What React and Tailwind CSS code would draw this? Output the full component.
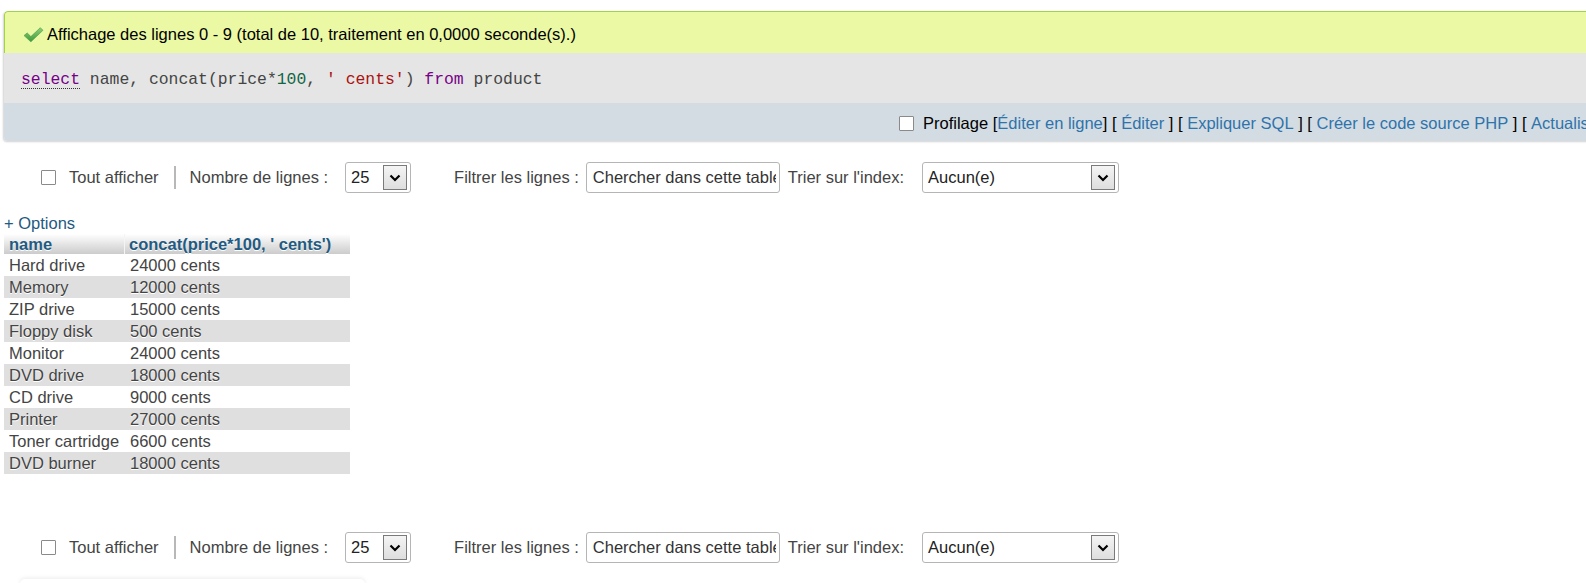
import React from "react";

function Checkbox() {
  return <div className="w-[15px] h-[15px] border border-[#8a8a8a] bg-white rounded-[1px] shrink-0" />;
}

function Chevron() {
  return (
    <svg width="12" height="8" viewBox="0 0 12 8">
      <path d="M1.5 1.5 L6 6 L10.5 1.5" fill="none" stroke="#000" strokeWidth="2.2" />
    </svg>
  );
}

function SelectBox({ width, value }) {
  return (
    <div className={`relative h-[31px] ${width} border border-[#b5b5b5] rounded-[3px] bg-white flex items-center pl-[5px] text-[#222]`}>
      <span>{value}</span>
      <div className="absolute right-[3px] top-[2px] w-[24px] h-[25px] border border-[#7a7a7a] bg-gradient-to-b from-[#f4f4f4] to-[#dedede] flex items-center justify-center">
        <Chevron />
      </div>
    </div>
  );
}

function Toolbar() {
  return (
    <div className="flex items-center h-[31px] text-[#444]">
      <div className="ml-[41px]"><Checkbox /></div>
      <span className="ml-[13px]">Tout afficher</span>
      <div className="ml-[15px] w-[2px] h-[23px] bg-[#b8b8b8]" />
      <span className="ml-[14px]">Nombre de lignes :</span>
      <div className="ml-[17px]"><SelectBox width="w-[66px]" value="25" /></div>
      <span className="ml-[43px]">Filtrer les lignes :</span>
      <div className="ml-[7px] h-[31px] w-[194px] border border-[#b5b5b5] rounded-[3px] bg-white flex items-center pl-[6px] pr-[3px] text-[#333]">
        <div className="flex-1 overflow-hidden whitespace-nowrap">Chercher dans cette table</div>
      </div>
      <span className="ml-[8px]">Trier sur l'index:</span>
      <div className="ml-[18px]"><SelectBox width="w-[197px]" value="Aucun(e)" /></div>
    </div>
  );
}

const rows = [
  ["Hard drive", "24000 cents"],
  ["Memory", "12000 cents"],
  ["ZIP drive", "15000 cents"],
  ["Floppy disk", "500 cents"],
  ["Monitor", "24000 cents"],
  ["DVD drive", "18000 cents"],
  ["CD drive", "9000 cents"],
  ["Printer", "27000 cents"],
  ["Toner cartridge", "6600 cents"],
  ["DVD burner", "18000 cents"],
];

export default function App() {
  return (
    <div className="w-[1586px] h-[583px] overflow-hidden bg-white text-[16.5px] text-black relative" style={{ fontFamily: '"Liberation Sans", Arial, sans-serif' }}>
      <div className="pt-[11px] pl-[4px]">
        <div className="w-[1640px] rounded-tl-[4px] rounded-bl-[4px] overflow-hidden shadow-[-1px_1px_2px_rgba(0,0,0,0.18)]">
          <div className="h-[42px] bg-[#ebf8a4] border-t border-l border-[#a2d246] rounded-tl-[4px] flex items-center pt-[4px]">
            <svg className="ml-[18px]" width="21" height="17" viewBox="0 0 20 16">
              <defs>
                <linearGradient id="g" x1="0" y1="0" x2="0" y2="1">
                  <stop offset="0" stopColor="#8fd07a" />
                  <stop offset="1" stopColor="#3d9a3a" />
                </linearGradient>
              </defs>
              <path d="M1 9 L4 6.5 L7.5 10 L16.5 1.5 L19 4 L7.5 15 Z" fill="url(#g)" stroke="#4a9a40" strokeWidth="0.6" />
            </svg>
            <span className="ml-[3px] text-black">Affichage des lignes 0 - 9 (total de 10, traitement en 0,0000 seconde(s).)</span>
          </div>
          <div className="h-[50px] bg-[#e5e5e5] flex items-center pl-[17px] pt-[4px] text-[16.4px] text-[#444]" style={{ fontFamily: '"Liberation Mono", "Courier New", monospace' }}>
            <span className="text-[#770088] border-b border-dotted border-[#333] leading-[17px]">select</span>
            <span className="whitespace-pre"> name, concat(price*</span>
            <span className="text-[#116644]">100</span>
            <span className="whitespace-pre">, </span>
            <span className="text-[#aa1111] whitespace-pre">' cents'</span>
            <span className="whitespace-pre">) </span>
            <span className="text-[#770088]">from</span>
            <span className="whitespace-pre"> product</span>
          </div>
          <div className="h-[38px] bg-[#d3dce3] flex items-center pl-[895px] pt-[3px] whitespace-nowrap">
            <Checkbox />
            <span className="ml-[9px]">Profilage [</span>
            <span className="text-[#2f73ab]">Éditer en ligne</span>
            <span className="whitespace-pre">] [ </span>
            <span className="text-[#2f73ab]">Éditer</span>
            <span className="whitespace-pre"> ] [ </span>
            <span className="text-[#2f73ab]">Expliquer SQL</span>
            <span className="whitespace-pre"> ] [ </span>
            <span className="text-[#2f73ab]">Créer le code source PHP</span>
            <span className="whitespace-pre"> ] [ </span>
            <span className="text-[#2f73ab]">Actualiser</span>
            <span className="whitespace-pre"> ]</span>
          </div>
        </div>
      </div>

      <div className="mt-[21px]">
        <Toolbar />
      </div>

      <div className="mt-[19px] ml-[4px] h-[22px] leading-[22px] text-[#235a81]">+ Options</div>

      <div className="ml-[4px] w-[346px]">
        <div className="flex h-[20px] font-bold text-[#235a81] [text-shadow:0_1px_0_#fff]">
          <div className="w-[121px] pl-[5px] leading-[20px] bg-gradient-to-b from-[#ffffff] to-[#cccccc] border-r border-[#f4f4f4]">name</div>
          <div className="flex-1 pl-[4px] leading-[20px] bg-gradient-to-b from-[#ffffff] to-[#cccccc]">concat(price*100, ' cents')</div>
        </div>
        {rows.map(([a, b], i) => (
          <div key={a} className={`flex h-[22px] leading-[23px] text-[#444] [text-shadow:0_1px_0_#fff] ${i % 2 === 1 ? "bg-[#dfdfdf]" : "bg-white"}`}>
            <div className="w-[121px] pl-[5px] whitespace-nowrap">{a}</div>
            <div className="flex-1 pl-[5px]">{b}</div>
          </div>
        ))}
      </div>

      <div className="mt-[58px]">
        <Toolbar />
      </div>

      <div className="absolute left-[20px] top-[579px] w-[345px] h-[10px] rounded-[6px] bg-white shadow-[0_-1px_4px_rgba(0,0,0,0.08)]" />
    </div>
  );
}
